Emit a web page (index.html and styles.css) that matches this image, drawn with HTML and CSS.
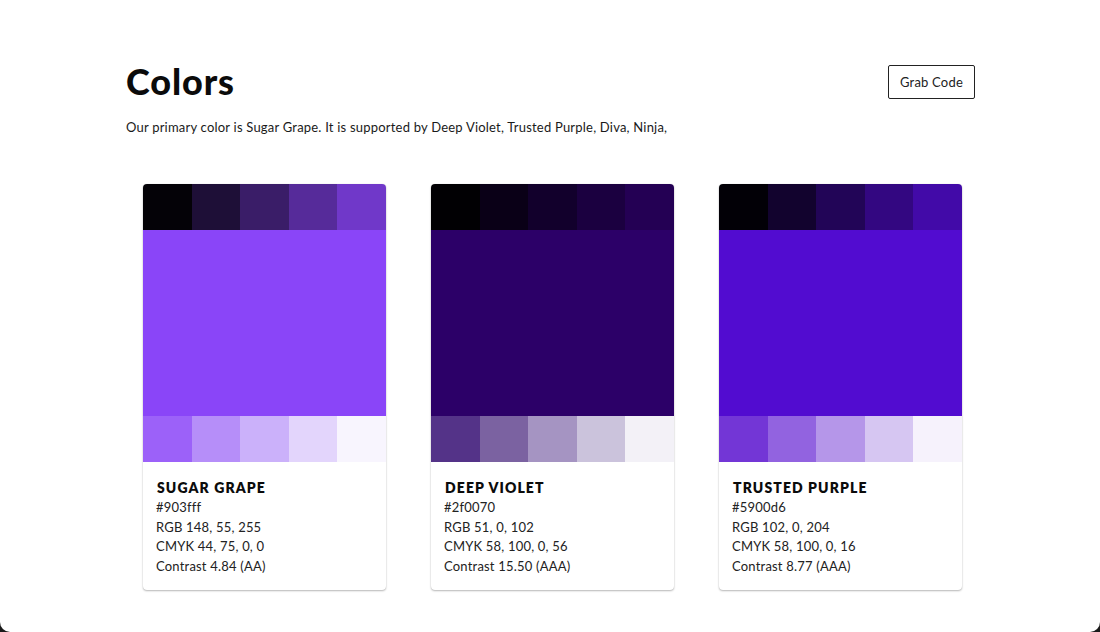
FILE: index.html
```html
<!DOCTYPE html>
<html>
<head>
<meta charset="utf-8">
<link rel="stylesheet" href="styles.css">
</head>
<body>
<div class="window">
  <div class="page">
    <header class="header">
      <h1 class="title">Colors</h1>
      <button class="grab">Grab Code</button>
    </header>
    <p class="intro">Our primary color is Sugar Grape. It is supported by Deep Violet, Trusted Purple, Diva, Ninja,</p>
    <div class="cards">
      <div class="card">
        <div class="strip">
          <span class="sw" style="background:#040207"></span>
          <span class="sw" style="background:#1e0f37"></span>
          <span class="sw" style="background:#3a1d68"></span>
          <span class="sw" style="background:#562b9a"></span>
          <span class="sw" style="background:#7038c9"></span>
        </div>
        <div class="main" style="background:#8a45f8"></div>
        <div class="strip">
          <span class="sw" style="background:#9c61f9"></span>
          <span class="sw" style="background:#b68ef9"></span>
          <span class="sw" style="background:#cbb1fa"></span>
          <span class="sw" style="background:#e3d5fc"></span>
          <span class="sw" style="background:#f8f5fe"></span>
        </div>
        <div class="info">
          <div class="name">SUGAR GRAPE</div>
          <div class="line">#903fff</div>
          <div class="line">RGB 148, 55, 255</div>
          <div class="line">CMYK 44, 75, 0, 0</div>
          <div class="line">Contrast 4.84 (AA)</div>
        </div>
      </div>
      <div class="card">
        <div class="strip">
          <span class="sw" style="background:#010003"></span>
          <span class="sw" style="background:#0a0017"></span>
          <span class="sw" style="background:#12002c"></span>
          <span class="sw" style="background:#1b0040"></span>
          <span class="sw" style="background:#240054"></span>
        </div>
        <div class="main" style="background:#2c0068"></div>
        <div class="strip">
          <span class="sw" style="background:#543388"></span>
          <span class="sw" style="background:#7b62a1"></span>
          <span class="sw" style="background:#a594c2"></span>
          <span class="sw" style="background:#cbc3dc"></span>
          <span class="sw" style="background:#f3f1f7"></span>
        </div>
        <div class="info">
          <div class="name">DEEP VIOLET</div>
          <div class="line">#2f0070</div>
          <div class="line">RGB 51, 0, 102</div>
          <div class="line">CMYK 58, 100, 0, 56</div>
          <div class="line">Contrast 15.50 (AAA)</div>
        </div>
      </div>
      <div class="card">
        <div class="strip">
          <span class="sw" style="background:#020006"></span>
          <span class="sw" style="background:#12032e"></span>
          <span class="sw" style="background:#220557"></span>
          <span class="sw" style="background:#330781"></span>
          <span class="sw" style="background:#420aa8"></span>
        </div>
        <div class="main" style="background:#520cd0"></div>
        <div class="strip">
          <span class="sw" style="background:#7336d6"></span>
          <span class="sw" style="background:#9263e0"></span>
          <span class="sw" style="background:#b596e9"></span>
          <span class="sw" style="background:#d6c6f2"></span>
          <span class="sw" style="background:#f6f2fc"></span>
        </div>
        <div class="info">
          <div class="name">TRUSTED PURPLE</div>
          <div class="line">#5900d6</div>
          <div class="line">RGB 102, 0, 204</div>
          <div class="line">CMYK 58, 100, 0, 16</div>
          <div class="line">Contrast 8.77 (AAA)</div>
        </div>
      </div>
    </div>
  </div>
</div>
</body>
</html>
```

FILE: styles.css
```css
html, body {
  margin: 0;
  padding: 0;
  background: #1a1a1a;
}

.window {
  width: 1100px;
  height: 632px;
  background: #ffffff;
  border-bottom-left-radius: 10px;
  border-bottom-right-radius: 10px;
  overflow: hidden;
  font-family: "Lato", "Noto Sans", sans-serif;
  color: #111111;
}

.page {
  padding: 59px 125px 0 126px;
}

.header {
  display: flex;
  justify-content: space-between;
  align-items: flex-start;
}

.title {
  margin: 0;
  font-size: 36px;
  font-weight: 900;
  line-height: 44px;
  letter-spacing: 0.9px;
  color: #0b0b0b;
}

.grab {
  margin-top: 6px;
  height: 34px;
  padding: 0 11px 0 11px;
  border: 1px solid #222222;
  border-radius: 2px;
  background: #ffffff;
  font-family: "Lato", "Noto Sans", sans-serif;
  font-size: 13px;
  letter-spacing: 0.2px;
  color: #222222;
}

.intro {
  margin: 15px 0 0 0;
  font-size: 13px;
  line-height: 18px;
  letter-spacing: 0.21px;
  color: #1a1a1a;
}

.cards {
  display: grid;
  grid-template-columns: repeat(3, 243px);
  column-gap: 45px;
  margin: 48px 0 0 17px;
}

.card {
  border-radius: 4px;
  overflow: hidden;
  background: #ffffff;
  box-shadow: 0 1px 2px rgba(0, 0, 0, 0.28), 0 0 1px rgba(0, 0, 0, 0.14);
}

.strip {
  display: flex;
  height: 46px;
}

.sw {
  flex: 1;
}

.main {
  height: 186px;
}

.info {
  padding: 17px 13px 13px 13px;
}

.name {
  font-size: 14px;
  font-weight: 800;
  letter-spacing: 1.1px;
  line-height: 18px;
  margin: 0 0 1px 1px;
  color: #0b0b0b;
}

.line {
  font-size: 13px;
  line-height: 19.7px;
  letter-spacing: 0.2px;
  color: #222222;
}
```
